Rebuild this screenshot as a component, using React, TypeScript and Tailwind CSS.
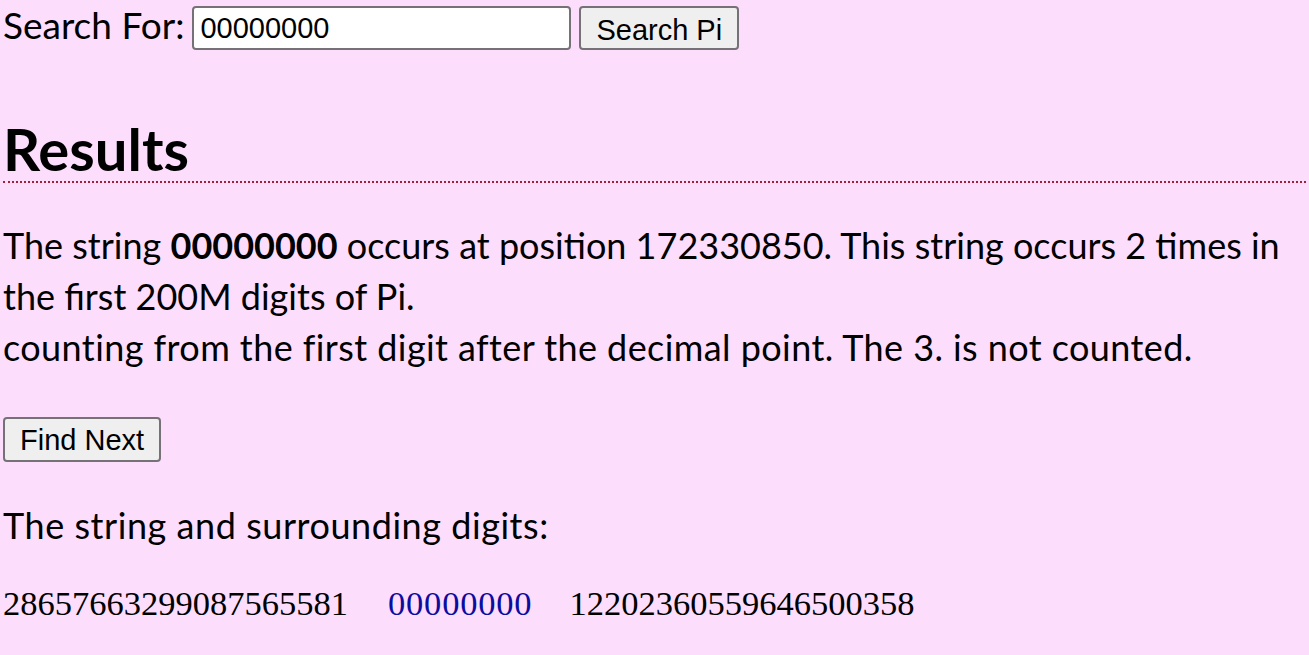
import React from 'react';

const body = { fontFamily: 'Lato, "Noto Sans", sans-serif' };
const btn = { fontFamily: '"Liberation Sans", Arial, sans-serif' };

export default function App() {
  return (
    <div className="min-h-[655px] bg-[#fcdefc] px-[3px] text-black" style={body}>
      <div className="flex items-center gap-[8px] pt-[6px] text-[37px] leading-[44px]">
        <span className="-mt-[6px]">Search For:</span>
        <input
          defaultValue="00000000"
          className="h-[44px] w-[379px] rounded-[4px] border-2 border-[#767176] bg-white px-[6px] text-[29px] outline-none"
          style={btn}
        />
        <button
          className="h-[44px] rounded-[4px] border-2 border-[#767176] bg-[#efefef] px-[15px] text-[29px]"
          style={btn}
        >
          Search Pi
        </button>
      </div>

      <h2 className="mt-[68px] border-b-2 border-dotted border-[#a3203a] pb-[1px] text-[58px] font-bold leading-[62px]">
        Results
      </h2>

      <p className="mt-[37px] text-[36px] leading-[51px]">
        The string <b>00000000</b> occurs at position 172330850. This string occurs 2 times in the first 200M digits of Pi.
        <br />
        <span className="tracking-[0.42px]">
          counting from the first digit after the decimal point. The 3. is not counted.
        </span>
      </p>

      <button
        className="mt-[44px] h-[45px] rounded-[4px] border-2 border-[#767176] bg-[#efefef] px-[15px] text-[29px]"
        style={btn}
      >
        Find Next
      </button>

      <p className="mt-[38px] text-[36px] leading-[51px] tracking-[0.55px]">The string and surrounding digits:</p>

      <p
        className="mt-[27px] text-[34.5px] leading-[51px]"
        style={{ fontFamily: '"Liberation Serif", "Times New Roman", serif' }}
      >
        <span>28657663299087565581</span>
        <span className="ml-[40px] tracking-[0.8px] text-[#0c0ca0]">00000000</span>
        <span className="ml-[37px]">12202360559646500358</span>
      </p>
    </div>
  );
}
